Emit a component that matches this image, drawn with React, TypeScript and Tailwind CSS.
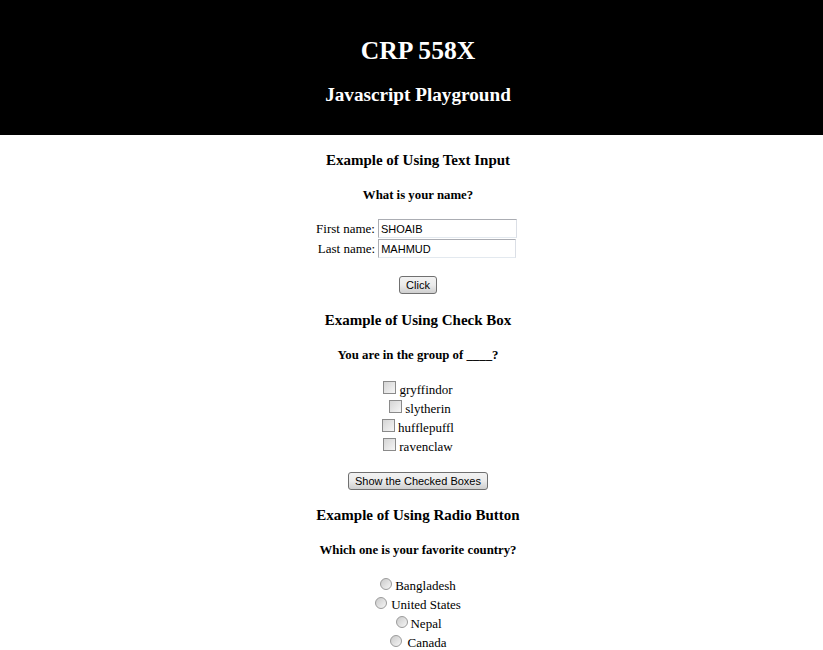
import { ReactNode } from "react"

const serif = { fontFamily: '"Liberation Serif", "Times New Roman", serif' }

function Btn({ children }: { children: ReactNode }) {
  return (
    <button className="h-[18px] px-[6px] rounded-[3px] border border-[#707070] bg-gradient-to-b from-[#f2f2f2] via-[#ebebeb] to-[#cfcfcf] text-[11px] leading-[14px] text-black font-['Liberation_Sans',sans-serif]">
      {children}
    </button>
  )
}

function Check({ label, pre = 0, gap = 3 }: { label: string; pre?: number; gap?: number }) {
  return (
    <div className="h-[19px] flex items-center justify-center">
      <span style={{ width: pre }} />
      <span className="w-[13px] h-[13px] border border-[#8a8a8a] bg-gradient-to-br from-[#d4d4d4] to-[#f6f6f6] mb-[4px]" />
      <span style={{ width: gap }} />
      <span className="text-[13px]">{label}</span>
    </div>
  )
}

function Radio({ label, pre = 0, gap = 3 }: { label: string; pre?: number; gap?: number }) {
  return (
    <div className="h-[19px] flex items-center justify-center">
      <span style={{ width: pre }} />
      <span className="w-[12px] h-[12px] rounded-full border border-[#9a9a9a] bg-gradient-to-br from-[#cacaca] to-[#f6f6f6] mb-[3px]" />
      <span style={{ width: gap }} />
      <span className="text-[13px]">{label}</span>
    </div>
  )
}

export default function App() {
  return (
    <div className="w-[823px] h-[650px] bg-white text-black overflow-hidden" style={serif}>
      <div className="bg-black text-white text-center h-[135px] pt-[36px] pl-[13px]">
        <h1 className="text-[25.6px] leading-[30px] font-bold">CRP 558X</h1>
        <h2 className="mt-[18px] text-[19.2px] leading-[22px] font-bold">Javascript Playground</h2>
      </div>

      <div className="flex flex-col items-center pl-[13px]">
        <h3 className="mt-[17px] text-[15px] leading-[17px] font-bold">Example of Using Text Input</h3>
        <h4 className="mt-[19px] text-[12.8px] leading-[15px] font-bold">What is your name?</h4>
        <div className="mt-[16px] flex flex-col gap-[1px] text-[13px]">
          <div className="flex items-center justify-center h-[19px] -ml-[3px]">
            <span className="mr-[3px]">First name:</span>
            <input
              defaultValue="SHOAIB"
              className="w-[139px] h-[19px] px-[2px] border border-[#abadb3] border-b-[#e3e9ef] border-r-[#dbdfe6] text-[11px] font-['Liberation_Sans',sans-serif] outline-none"
            />
          </div>
          <div className="flex items-center justify-center h-[19px] -ml-[2px]">
            <span className="mr-[3px]">Last name:</span>
            <input
              defaultValue="MAHMUD"
              className="w-[138px] h-[19px] px-[2px] border border-[#abadb3] border-b-[#e3e9ef] border-r-[#dbdfe6] text-[11px] font-['Liberation_Sans',sans-serif] outline-none"
            />
          </div>
        </div>
        <div className="mt-[14px]">
          <Btn>Click</Btn>
        </div>

        <h3 className="mt-[16px] text-[15px] leading-[17px] font-bold">Example of Using Check Box</h3>
        <h4 className="mt-[19px] text-[12.8px] leading-[15px] font-bold">You are in the group of ____?</h4>
        <div className="mt-[17px] flex flex-col">
          <Check label="gryffindor" />
          <Check label="slytherin" pre={4} />
          <Check label="hufflepuffl" gap={3} pre={-2} />
          <Check label="ravenclaw" gap={3} />
        </div>
        <div className="mt-[12px]">
          <Btn>Show the Checked Boxes</Btn>
        </div>

        <h3 className="mt-[15px] text-[15px] leading-[17px] font-bold">Example of Using Radio Button</h3>
        <h4 className="mt-[19px] text-[12.8px] leading-[15px] font-bold">Which one is your favorite country?</h4>
        <div className="mt-[18px] flex flex-col">
          <Radio label="Bangladesh" />
          <Radio label="United States" gap={4} />
          <Radio label="Nepal" gap={2} pre={2} />
          <Radio label="Canada" gap={6} />
        </div>
      </div>
    </div>
  )
}
